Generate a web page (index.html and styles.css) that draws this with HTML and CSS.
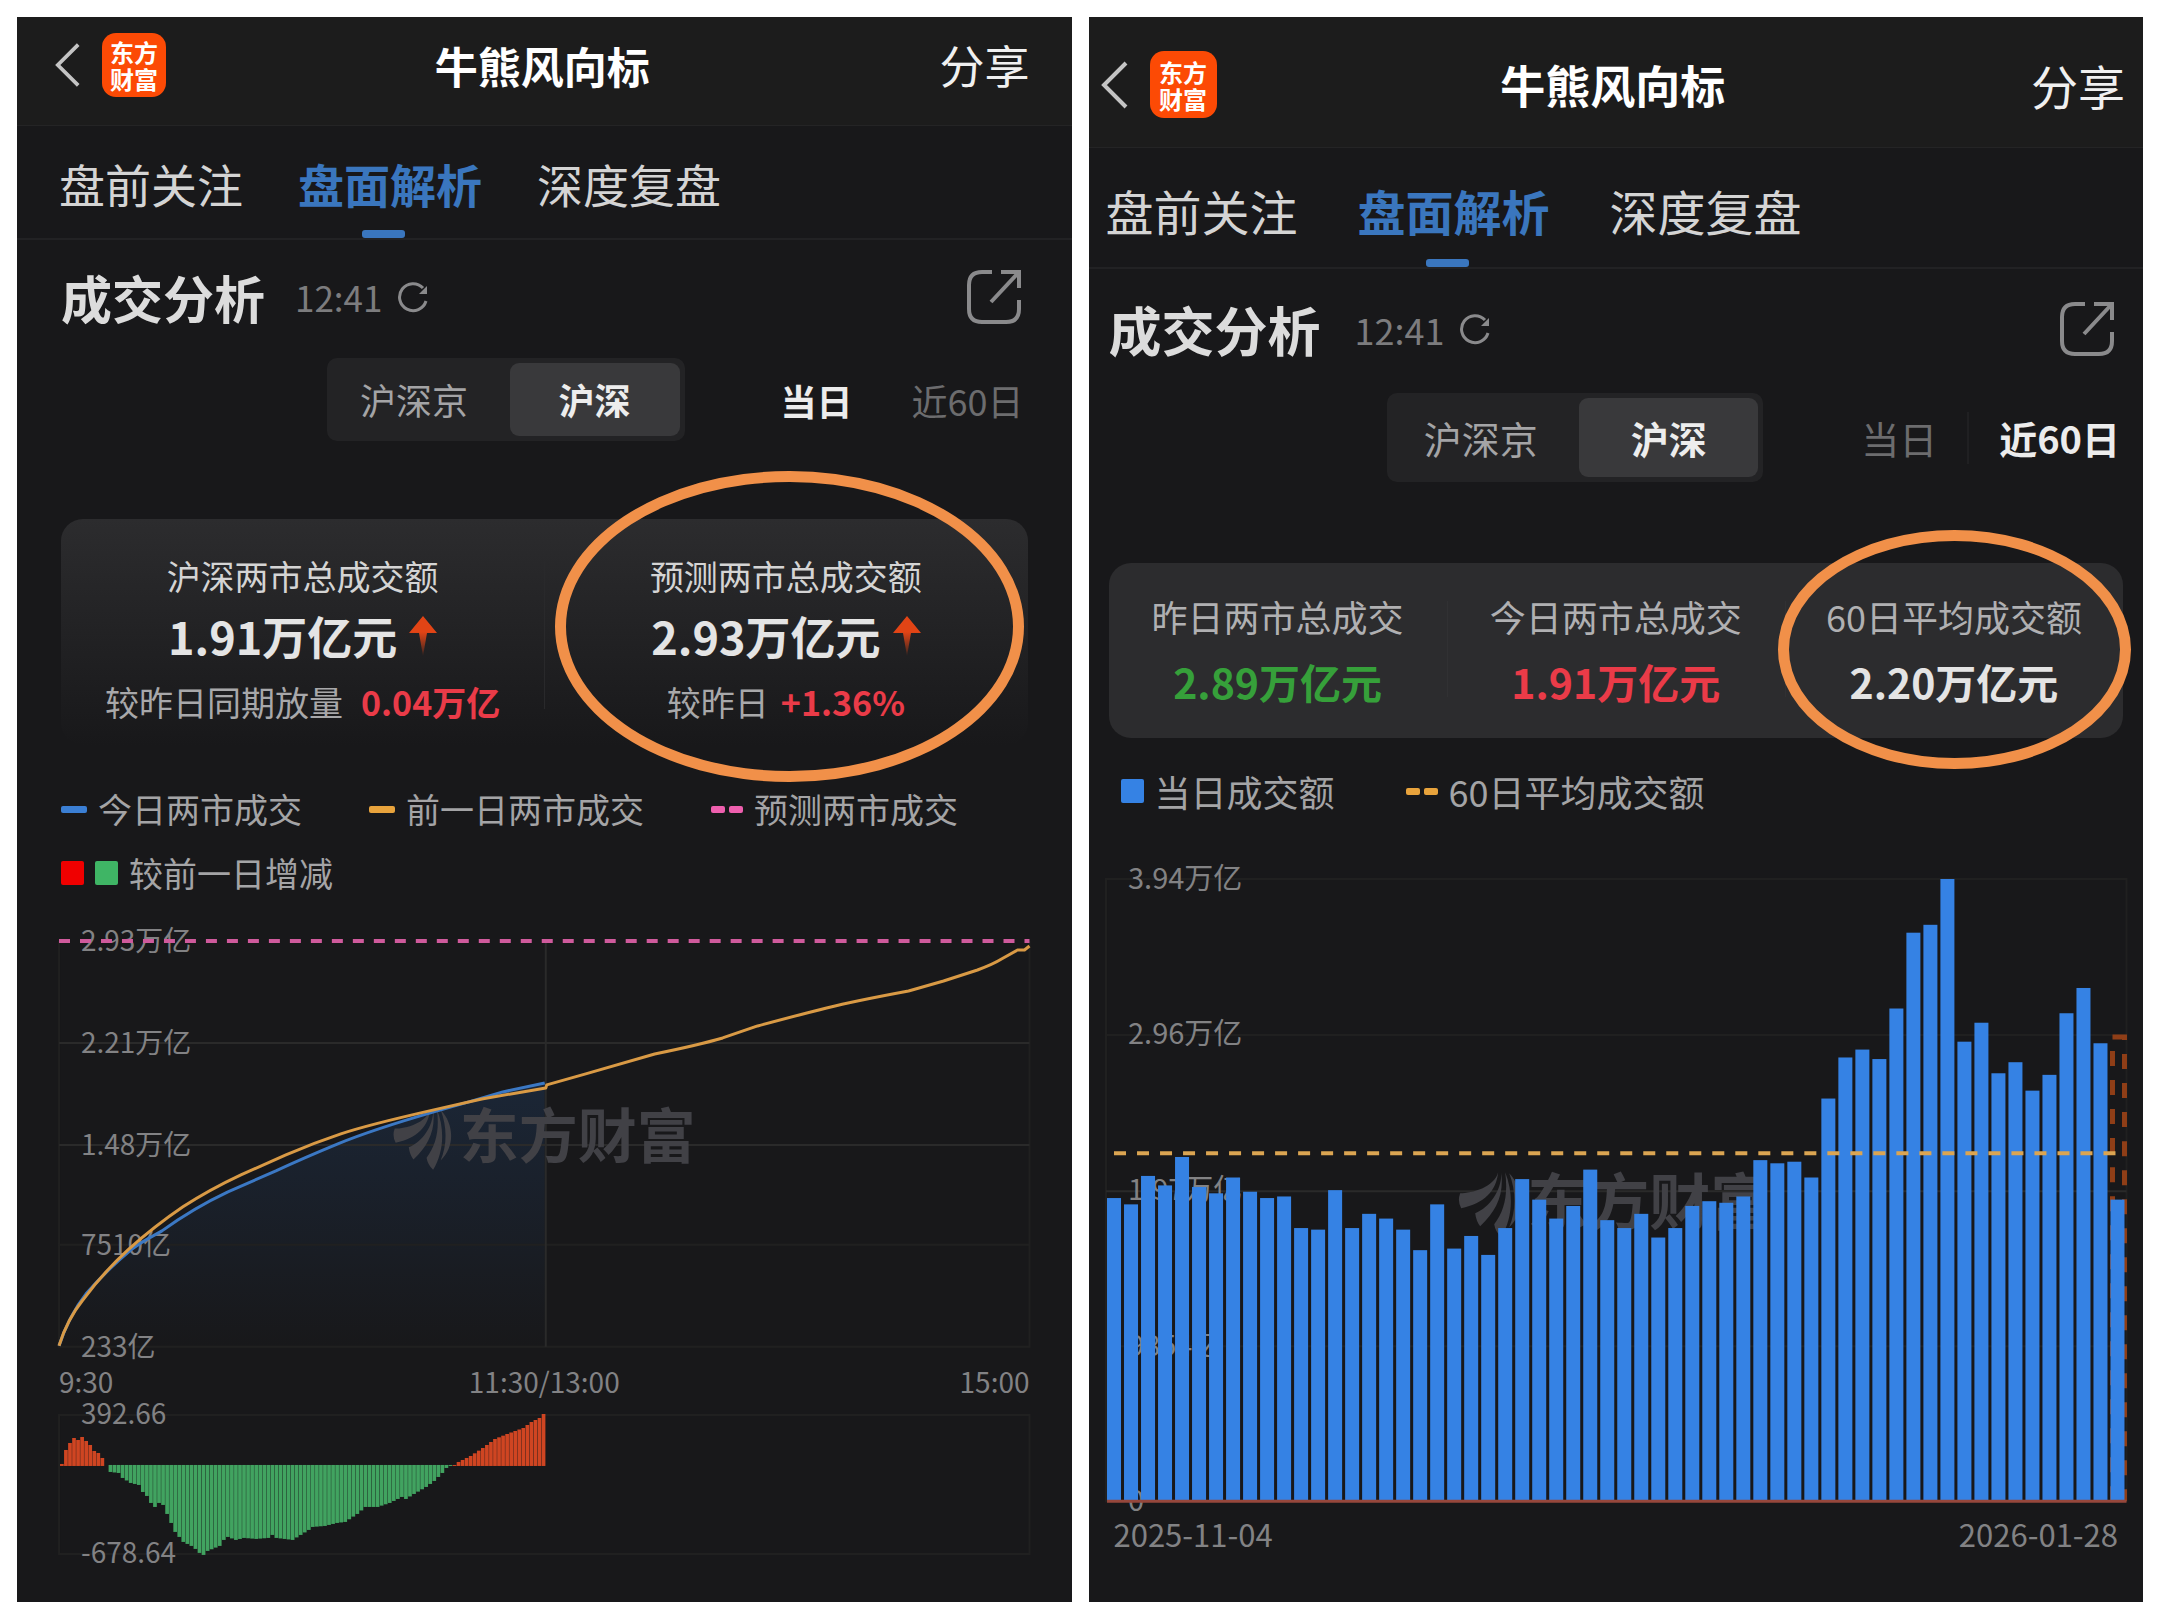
FILE: index.html
```html
<!DOCTYPE html>
<html lang="zh-CN">
<head>
<meta charset="utf-8">
<meta name="viewport" content="width=device-width, initial-scale=1">
<title>牛熊风向标</title>
<link rel="stylesheet" href="styles.css">
</head>
<body>
<svg class="defs" aria-hidden="true">
  <symbol id="back" viewBox="0 0 28 48"><path d="M25 2 3 24l22 22" fill="none" stroke="currentColor" stroke-width="4"/></symbol>
  <symbol id="refresh" viewBox="0 0 32 32"><path d="M29 20A13.500 13.500 0 1 1 26 7" fill="none" stroke="currentColor" stroke-width="3"/><path d="M30 5v8h-8z" fill="currentColor"/></symbol>
  <symbol id="open" viewBox="0 0 54 54"><path d="M25 2H15Q2 2 2 15v24q0 13 13 13h24q13 0 13-13V30M34 2h18v16M51 3 24 32" fill="none" stroke="currentColor" stroke-width="4"/></symbol>
  <symbol id="up" viewBox="0 0 28 40"><path d="M14 0 28 17H18L14 40 10 17H0z" fill="url(#up-fill)"/></symbol>
  <symbol id="leaf" viewBox="0 0 64 66"><path d="M40 1C36 16 14 22 2 22Q-1 30 3 37C26 32 38 20 40 1M43 1C44 18 32 36 17 42Q18 50 22 55C38 40 46 24 43 1M47 1C50 24 46 40 36 53Q37 60 43 66C54 48 56 24 47 1M51 2C58 20 58 40 51 56C66 42 66 18 51 2" fill="currentColor"/></symbol>
  <linearGradient id="up-fill" x1="0" y1="0" x2="0" y2="1"><stop offset=".4" stop-color="#e24415"/><stop offset="1" stop-color="#e24415" stop-opacity=".1"/></linearGradient>
</svg>
<main class="board">

<section class="panel">
  <header class="topbar">
    <div class="brand">
      <button class="icon-btn" type="button" aria-label="返回"><svg class="back"><use href="#back"/></svg></button>
      <span class="logo">东方<br>财富</span>
    </div>
    <h1 class="title">牛熊风向标</h1>
    <button class="share" type="button">分享</button>
  </header>
  <nav class="tabs">
    <a class="tab" href="#pre">盘前关注</a>
    <a class="tab tab--on" href="#live" aria-current="page">盘面解析</a>
    <a class="tab" href="#deep">深度复盘</a>
  </nav>
  <div class="heading">
    <h2 class="heading-title">成交分析</h2>
    <span class="time">12:41</span>
    <button class="icon-btn" type="button" aria-label="刷新"><svg class="refresh"><use href="#refresh"/></svg></button>
    <button class="icon-btn heading-open" type="button" aria-label="打开"><svg class="open"><use href="#open"/></svg></button>
  </div>
  <div class="controls">
    <div class="segment">
      <button class="seg" type="button">沪深京</button>
      <button class="seg seg--on" type="button" aria-pressed="true">沪深</button>
    </div>
    <div class="periods">
      <button class="period period--on" type="button" aria-pressed="true">当日</button>
      <button class="period" type="button">近60日</button>
    </div>
  </div>
  <div class="stats stats--fade">
    <div class="stat">
      <span class="stat-label">沪深两市总成交额</span>
      <strong class="stat-value">1.91万亿元<svg class="up"><use href="#up"/></svg></strong>
      <span class="stat-note">较昨日同期放量 <b class="delta">0.04万亿</b></span>
    </div>
    <div class="stat stat--ringed">
      <span class="stat-label">预测两市总成交额</span>
      <strong class="stat-value">2.93万亿元<svg class="up"><use href="#up"/></svg></strong>
      <span class="stat-note stat-note--tight">较昨日 <b class="delta">+1.36%</b></span>
    </div>
  </div>
  <ul class="legend">
    <li class="key"><i class="dash dash--blue"></i>今日两市成交</li>
    <li class="key"><i class="dash dash--amber"></i>前一日两市成交</li>
    <li class="key"><i class="dots dots--pink"></i>预测两市成交</li>
    <li class="key"><i class="box box--red"></i><i class="box box--green"></i>较前一日增减</li>
  </ul>
  <svg class="chart" viewBox="0 0 971 406" role="img" aria-label="两市成交额走势">
    <defs><linearGradient id="area" x1="0" y1="0" x2="0" y2="1"><stop offset="0" stop-color="#1b2636"/><stop offset="1" stop-color="#18181a"/></linearGradient></defs>
    <path class="area" d="M0 405C4 393 14 370 27 352Q48 328 72 307C85 297 93 296 103 290Q135 267 169 251L217 230 279 203 310 191 375 171 410 161 444 151 486 142V406z"/>
    <path class="grid" d="M0 0V406H971V0M0 304H971"/>
    <path class="grid grid--strong" d="M0 102H971M0 204H971M487 0V406"/>
    <g class="mark"><use href="#leaf" x="334" y="167" width="60" height="62"/><text x="401" y="217">东方财富</text></g>
    <g class="axis">
      <text x="22" y="10">2.93万亿</text><text x="22" y="112">2.21万亿</text><text x="22" y="214">1.48万亿</text><text x="22" y="314">7510亿</text><text x="22" y="416">233亿</text>
    </g>
    <path class="forecast" d="M0 0H971"/>
    <path class="line line--today" d="M0 405C4 393 12 372 27 353Q48 329 72 309C85 299 93 296 103 290Q135 267 169 251L217 230Q245 217 279 203T375 171L410 161 444 151 486 142"/>
    <path class="line line--prev" d="M0 405C4 392 12 374 24 359Q44 332 69 309 96 285 124 266 150 249 182 234L227 214Q255 202 282 193T375 169L423 158 458 152 487 147 488 144 527 133 596 113Q640 104 664 97L699 85Q740 74 768 67T850 50L885 40 919 29Q935 23 943 18L959 9 966 9 971 5"/>
  </svg>
  <div class="scale"><span>9:30</span><span>11:30/13:00</span><span class="scale-end">15:00</span></div>
  <svg class="chart" viewBox="0 0 971 139" role="img" aria-label="较前一日增减">
    <path class="grid" d="M0 0H971V139H0z"/>
    <g class="axis"><text x="22" y="9">392.66</text><text x="22" y="148">-678.64</text></g>
    <g id="diff"></g>
  </svg>
</section>

<section class="panel panel--large">
  <header class="topbar">
    <div class="brand">
      <button class="icon-btn" type="button" aria-label="返回"><svg class="back"><use href="#back"/></svg></button>
      <span class="logo">东方<br>财富</span>
    </div>
    <h1 class="title">牛熊风向标</h1>
    <button class="share" type="button">分享</button>
  </header>
  <nav class="tabs">
    <a class="tab" href="#pre">盘前关注</a>
    <a class="tab tab--on" href="#live" aria-current="page">盘面解析</a>
    <a class="tab" href="#deep">深度复盘</a>
  </nav>
  <div class="heading">
    <h2 class="heading-title">成交分析</h2>
    <span class="time">12:41</span>
    <button class="icon-btn" type="button" aria-label="刷新"><svg class="refresh"><use href="#refresh"/></svg></button>
    <button class="icon-btn heading-open" type="button" aria-label="打开"><svg class="open"><use href="#open"/></svg></button>
  </div>
  <div class="controls">
    <div class="segment">
      <button class="seg" type="button">沪深京</button>
      <button class="seg seg--on" type="button" aria-pressed="true">沪深</button>
    </div>
    <div class="periods periods--split">
      <button class="period" type="button">当日</button>
      <button class="period period--on" type="button" aria-pressed="true">近60日</button>
    </div>
  </div>
  <div class="stats">
    <div class="stat">
      <span class="stat-label">昨日两市总成交</span>
      <strong class="stat-value stat-value--down">2.89万亿元</strong>
    </div>
    <div class="stat">
      <span class="stat-label">今日两市总成交</span>
      <strong class="stat-value stat-value--up">1.91万亿元</strong>
    </div>
    <div class="stat stat--ringed">
      <span class="stat-label">60日平均成交额</span>
      <strong class="stat-value">2.20万亿元</strong>
    </div>
  </div>
  <ul class="legend">
    <li class="key"><i class="box box--blue"></i>当日成交额</li>
    <li class="key"><i class="dots dots--amber"></i>60日平均成交额</li>
  </ul>
  <svg class="chart" viewBox="0 0 1020 622" role="img" aria-label="近60日成交额">
    <path class="grid" d="M0 0H1020V622H0zM0 156H1020M0 467H1020"/>
    <path class="grid grid--strong" d="M0 312H1020"/>
    <g class="mark mark--large"><use href="#leaf" x="352" y="292" width="64" height="66"/><text x="421" y="346">东方财富</text></g>
    <g class="axis">
      <text x="22" y="10">3.94万亿</text><text x="22" y="165">2.96万亿</text><text x="22" y="321">1.97万亿</text><text x="22" y="477">9854亿</text><text x="22" y="632">0</text>
    </g>
    <path class="projected" d="M1006 622V158H1018V622"/>
    <g id="volume"></g>
    <path class="floor" d="M1 622H1020"/>
    <path class="average" d="M8 274H1014"/>
  </svg>
  <div class="scale scale--dates"><span>2025-11-04</span><span class="scale-end">2026-01-28</span></div>
</section>

</main>
<script src="charts.js"></script>
</body>
</html>
```
FILE: styles.css
```css
* { box-sizing: border-box; }

body {
  margin: 0;
  background: #fff;
  font-family: "Noto Sans CJK SC", "Noto Sans", sans-serif;
}

button {
  padding: 0;
  border: 0;
  background: none;
  color: inherit;
  font: inherit;
}

.defs { position: absolute; width: 0; height: 0; }

.board {
  display: grid;
  grid-template-columns: 1fr 1fr;
  gap: 17px;
  padding: 17px;
}

.panel {
  --edge: 44px;
  --plot: 42px;
  --bar: 109px;
  --bar-pad: 0 42px 13px 38px;
  --icon: 62px;
  --logo: 64px;
  --back: 26px;
  --title: 43px;
  --share: 45px;
  --tab: 46px;
  --tab-gap: 55px;
  --tabs: 114px;
  --h2: 51px;
  --time: 35px;
  --row: 118px;
  --control: 36px;
  --small: 34px;
  --value: 45px;
  --axis: 28px;
  min-width: 0;
  padding-bottom: 48px;
  background: #18181a;
  color: #dcdcdc;
}

.panel--large {
  --edge: 20px;
  --plot: 17px;
  --bar: 131px;
  --bar-pad: 5px 18px 0 12px;
  --logo: 67px;
  --back: 28px;
  --title: 45px;
  --share: 47px;
  --tab: 48px;
  --tab-gap: 60px;
  --tabs: 121px;
  --h2: 53px;
  --time: 36px;
  --row: 124px;
  --control: 38px;
  --small: 36px;
  --value: 41px;
  --axis: 29px;
  padding-bottom: 44px;
}

/* Top bar */
.topbar {
  display: grid;
  grid-template-columns: 1fr auto 1fr;
  align-items: center;
  height: var(--bar);
  padding: var(--bar-pad);
  border-bottom: 1px solid #242425;
  background: #1c1c1c;
}
.brand { display: flex; align-items: center; gap: 21px; }
.icon-btn { display: flex; color: #8a8a8c; }
.back { width: var(--back); height: 48px; color: #c4c4c4; }
.logo {
  display: grid;
  place-content: center;
  width: var(--logo);
  height: var(--logo);
  border-radius: 14px;
  background: #fc4a05;
  color: #fff;
  font-size: 24px;
  font-weight: 700;
  line-height: 27px;
}
.title { margin: 0; color: #fff; font-size: var(--title); font-weight: 700; line-height: 60px; }
.share { justify-self: end; color: #f0f0f0; font-size: var(--share); line-height: 60px; }

/* Tabs */
.tabs {
  display: flex;
  gap: var(--tab-gap);
  height: var(--tabs);
  padding-left: var(--plot);
  border-bottom: 2px solid #222224;
}
.panel--large .tabs { padding-left: 17px; }
.tab {
  position: relative;
  padding-top: 23px;
  color: #d4d4d4;
  font-size: var(--tab);
  line-height: 68px;
  text-decoration: none;
}
.panel--large .tab { padding-top: 28px; }
.tab--on { color: #3a76be; font-weight: 700; }
.tab--on::after {
  content: "";
  position: absolute;
  bottom: 0;
  left: calc(50% - 28px);
  width: 43px;
  height: 8px;
  border-radius: 3px;
  background: #3a76be;
}

/* Section heading */
.heading {
  display: flex;
  align-items: center;
  height: var(--row);
  padding: 0 51px 5px var(--edge);
}
.panel--large .heading { padding-right: 29px; }
.heading-title { margin: 0 30px 0 0; font-size: var(--h2); font-weight: 700; line-height: 72px; }
.time { margin-right: 15px; color: #7c7c7e; font-size: var(--time); line-height: 50px; }
.panel--large .heading-title { margin-right: 34px; }
.refresh { width: 32px; height: 32px; }
.heading-open { margin-left: auto; }
.open { width: 54px; height: 54px; }

/* Market and period switches */
.controls {
  display: flex;
  justify-content: flex-end;
  align-items: center;
  gap: 96px;
  padding-right: 48px;
  font-size: var(--control);
}
.panel--large .controls { gap: 98px; padding-right: 23px; }
.segment { display: flex; padding: 5px; border-radius: 10px; background: #232325; }
.seg {
  width: 178px;
  padding-right: 13px;
  border-radius: 9px;
  color: #a4a4a6;
  line-height: 73px;
}
.seg--on { width: 170px; padding: 0; background: #39393b; color: #ededed; font-weight: 700; }
.panel--large .seg { width: 187px; line-height: 79px; }
.panel--large .seg--on { width: 179px; }
.panel--large .seg:first-child { padding-right: 10px; }
.periods { display: flex; align-items: center; gap: 59px; }
.period { color: #6c6c6e; line-height: 52px; }
.period--on { color: #ececec; font-weight: 700; }
.periods--split { gap: 30px; }
.periods--split .period + .period { padding-left: 30px; border-left: 2px solid #202022; }

/* Figures */
.stats {
  display: flex;
  margin: 81px var(--edge) 0;
  padding: 28px 0 17px;
  border-radius: 22px;
  background: #2c2c2e;
}
.stats--fade {
  margin-top: 78px;
  padding: 32px 0 12px;
  background: linear-gradient(#2c2c2e, #18181a);
}
.stat { position: relative; display: flex; flex: 1; flex-direction: column; align-items: center; }
.stat + .stat::before {
  content: "";
  position: absolute;
  top: 10px;
  bottom: 24px;
  left: 0;
  width: 1px;
  background: #313133;
}
.stats--fade .stat + .stat::before { background: #29292b; }
.stat-label { color: #b0b0b2; font-size: var(--small); line-height: 50px; }
.stats--fade .stat-label { color: #d4d4d4; }
.stat-value {
  display: flex;
  align-items: center;
  gap: 12px;
  color: #e4e4e4;
  font-size: var(--value);
  font-weight: 700;
  line-height: 80px;
}
.stats--fade .stat-value { line-height: 70px; }
.stat-value--down { color: #36a03a; }
.stat-value--up { color: #ea3b48; }
.up { width: 28px; height: 40px; }
.stat-note {
  display: flex;
  gap: 18px;
  color: #a8a8aa;
  font-size: var(--small);
  line-height: 62px;
}
.stat-note--tight { gap: 12px; }
.delta { color: #ea3b48; font-weight: 700; }

/* Hand-drawn highlight over the key figure */
.stat--ringed::after {
  content: "";
  position: absolute;
  inset: -61px -8px -48px -7px;
  border: 11px solid #f19049;
  border-radius: 50%;
}
.stats--fade .stat--ringed::after { inset: -80px 4px -49px 11px; }

/* Legend */
.legend {
  display: flex;
  flex-wrap: wrap;
  column-gap: 67px;
  margin: 32px var(--edge) 36px;
  padding: 0;
  color: #a4a4a6;
  font-size: var(--small);
  line-height: 64px;
  list-style: none;
}
.panel--large .legend { margin: 20px 32px 55px; line-height: 66px; column-gap: 71px; }
.key { display: flex; align-items: center; gap: 11px; }
.dash { width: 26px; height: 7px; border-radius: 2px; }
.dash--blue { background: #3b7fd4; }
.dash--amber { background: #e8a33c; }
.dots { display: flex; justify-content: space-between; width: 32px; }
.dots::before, .dots::after { content: ""; width: 14px; height: 7px; border-radius: 2px; background: currentColor; }
.dots--pink { color: #ee5fae; }
.dots--amber { color: #e8a33c; }
.box { width: 23px; height: 24px; border-radius: 2px; }
.box--red { background: #f00000; }
.box--green { background: #3fb565; }
.box--blue { background: #3582e4; }

/* Charts */
.chart {
  display: block;
  width: calc(100% - var(--plot) * 2);
  margin: 0 var(--plot);
  overflow: visible;
}
.grid { fill: none; stroke: #202020; stroke-width: 2; }
.grid--strong { stroke: #2a2a2a; }
.axis { fill: #828284; font-size: var(--axis); }
.mark { color: #414146; fill: #414146; font-size: 59px; font-weight: 700; }
.mark--large { font-size: 61px; }
.area { fill: url(#area); }
.line { fill: none; stroke-width: 3; stroke-linejoin: round; }
.line--today { stroke: #3b78c4; }
.line--prev { stroke: #d99a45; }
.forecast { stroke: #cf5a9c; stroke-width: 4; stroke-dasharray: 11 10; }
.gain { fill: #cf4522; }
.loss { fill: #41a360; }
.volume { fill: #3582e4; }
.projected { fill: none; stroke: #8f3e17; stroke-width: 5; stroke-dasharray: 15 14; }
.average { stroke: #dba552; stroke-width: 4; stroke-dasharray: 12 11; }
.floor { stroke: #96473c; stroke-width: 3; }
.scale {
  display: grid;
  grid-template-columns: 1fr auto 1fr;
  padding: 13px var(--plot);
  color: #828284;
  font-size: 28px;
  line-height: 42px;
}
.scale--dates {
  grid-template-columns: 1fr 1fr;
  padding: 11px 25px 0;
  font-size: 31px;
  line-height: 44px;
}
.scale-end { text-align: right; }
```
FILE: charts.js
```js
const NS = "http://www.w3.org/2000/svg";

function bar(parent, cls, x, y, width, height) {
  const rect = document.createElementNS(NS, "rect");
  rect.setAttribute("class", cls);
  rect.setAttribute("x", x);
  rect.setAttribute("y", y);
  rect.setAttribute("width", width);
  rect.setAttribute("height", height);
  parent.appendChild(rect);
}

// Daily turnover of the last 60 sessions, in 100 billion yuan.
const turnover = [
  19.2, 18.8, 20.6, 20.0, 21.8, 19.9, 19.5, 20.5, 19.6, 19.2, 19.3, 17.3, 17.2, 19.7, 17.3,
  18.2, 17.9, 17.2, 15.9, 18.8, 16.0, 16.8, 15.6, 17.3, 20.4, 19.1, 17.9, 18.7, 21.0, 17.8,
  17.3, 18.2, 16.7, 17.3, 18.7, 19.0, 18.9, 19.3, 21.6, 21.4, 21.5, 20.5, 25.5, 28.1, 28.6,
  28.0, 31.2, 36.0, 36.5, 39.4, 29.1, 30.3, 27.1, 27.8, 26.0, 27.0, 30.9, 32.5, 29.0, 19.1
];
const volume = document.getElementById("volume");
turnover.forEach((value, i) => {
  const height = value / 39.4 * 622;
  bar(volume, "volume", 1 + i * 17, 622 - height, 14, height);
});

// Minute-by-minute difference from the previous day: [minute, height].
const difference = [
  [0, 2], [1, 16], [2, 23], [3, 28], [4, 26], [5, 29], [6, 25], [7, 21], [8, 15], [9, 13], [10, 8],
  [11, 0], [12, -7], [14, -8], [15, -13], [17, -18], [19, -20], [20, -27], [21, -31], [22, -38],
  [23, -42], [24, -38], [25, -40], [26, -49], [27, -58], [28, -67], [29, -72], [30, -77], [32, -81],
  [33, -84], [34, -88], [35, -90], [36, -86], [39, -81], [40, -75], [41, -72], [43, -75], [45, -73],
  [48, -74], [51, -73], [52, -70], [53, -73], [57, -75], [59, -70], [61, -65], [62, -62], [65, -61],
  [68, -58], [70, -57], [73, -49], [75, -42], [78, -42], [81, -38], [84, -32], [85, -34], [87, -29],
  [90, -22], [92, -16], [94, -8], [95, -3], [96, -1], [97, 1], [98, 4], [101, 10], [104, 18],
  [107, 27], [110, 32], [114, 38], [116, 44], [118, 48], [119, 52]
];
const diff = document.getElementById("diff");
for (let k = 0; k < difference.length - 1; k++) {
  const [from, a] = difference[k];
  const [to, b] = difference[k + 1];
  const last = k === difference.length - 2;
  for (let minute = from; minute < to + (last ? 1 : 0); minute++) {
    const value = a + (b - a) * (minute - from) / (to - from);
    if (value === 0) continue;
    const height = Math.abs(value);
    bar(diff, value > 0 ? "gain" : "loss", 1 + minute * 4.05, value > 0 ? 51 - height : 50, 3.7, height);
  }
}
```
